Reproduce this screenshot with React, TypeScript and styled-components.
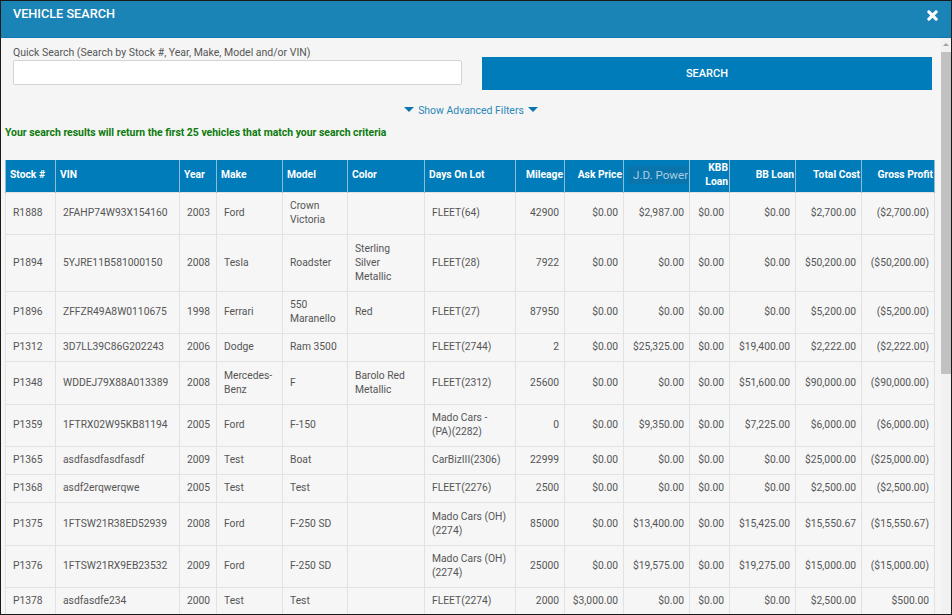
import React from 'react';
import styled, { createGlobalStyle } from 'styled-components';

const GlobalStyle = createGlobalStyle`
  html, body {
    margin: 0;
    padding: 0;
    height: 100%;
    overflow: hidden;
    background: #f5f5f5;
  }
  body {
    font-family: Roboto, "Liberation Sans", sans-serif;
    font-size: 11px;
    color: #555;
  }
`;

const Modal = styled.div`
  width: 952px;
  height: 615px;
  box-sizing: border-box;
  border: 1px solid #1a1a1a;
  display: flex;
  flex-direction: column;
  overflow: hidden;
  background: #f5f5f5;
`;

const Header = styled.header`
  flex: none;
  height: 37px;
  box-sizing: border-box;
  background: #1b84b7;
  border-bottom: 1px solid #1378ad;
  padding: 5px 12px 0 12px;
  display: flex;
  justify-content: space-between;
  align-items: flex-start;
`;

const Title = styled.h1`
  margin: 0;
  font-size: 12.7px;
  line-height: 15px;
  font-weight: 500;
  color: #fff;
`;

const CloseIcon = styled.svg`
  width: 11px;
  height: 11px;
  margin: 4px 1px 0 0;
  fill: #fff;
`;

const Body = styled.div`
  flex: 1;
  display: flex;
  min-height: 0;
`;

const Content = styled.main`
  flex: 1;
  min-width: 0;
  overflow: hidden;
`;

const SearchRow = styled.div`
  display: flex;
  gap: 20px;
  padding: 8px 0 0 12px;
  align-items: flex-start;
`;

const SearchField = styled.div`
  width: 449px;
  flex: none;
`;

const FieldLabel = styled.label`
  display: block;
  font-size: 10.5px;
  line-height: 13px;
  color: #555;
  margin-bottom: 1px;
`;

const SearchInput = styled.input`
  display: block;
  width: 100%;
  height: 25px;
  box-sizing: border-box;
  border: 1px solid #d4d4d4;
  border-radius: 2px;
  background: #fff;
  outline: none;
`;

const SearchButton = styled.button`
  flex: none;
  width: 450px;
  height: 33px;
  margin-top: 11px;
  border: none;
  background: #007cba;
  color: #fff;
  font: 500 11px Roboto, sans-serif;
`;

const FilterToggle = styled.div`
  display: flex;
  justify-content: center;
  align-items: center;
  gap: 4px;
  margin-top: 13px;
  height: 14px;
  color: #2b87b8;
  font-size: 10.45px;
`;

const Caret = styled.span`
  display: inline-block;
  width: 0;
  height: 0;
  border-left: 5px solid transparent;
  border-right: 5px solid transparent;
  border-top: 5px solid #0a78b0;
  margin-top: -2px;
`;

const Notice = styled.p`
  margin: 9px 0 0 4px;
  font-size: 10.43px;
  line-height: 14px;
  font-weight: 700;
  color: #0b7a0b;
`;

const Table = styled.table`
  margin: 20px 0 0 4px;
  width: 929px;
  table-layout: fixed;
  border-collapse: collapse;
`;

const HeadCell = styled.th<{ $right?: boolean }>`
  height: 32px;
  box-sizing: border-box;
  padding: 0 1px 2px ${({ $right }) => ($right ? '0' : '4px')};
  background: #007cba;
  border: 1px solid #8fbcd4;
  border-top: none;
  border-bottom: none;
  color: #fff;
  font-size: 10.3px;
  line-height: 14px;
  font-weight: 700;
  text-align: ${({ $right }) => ($right ? 'right' : 'left')};
`;

const PowerLabel = styled.span`
  display: block;
  margin: 0 0 0 4px;
  padding: 2px 0 2px 5px;
  text-align: left;
  white-space: nowrap;
  overflow: hidden;
  background: #0a74ad;
  color: #a9cfe4;
  font-weight: 400;
  font-size: 11.6px;
`;

const Row = styled.tr`
  background: #f6f6f6;
`;

const Cell = styled.td<{ $right?: boolean }>`
  box-sizing: border-box;
  padding: 4px ${({ $right }) => ($right ? '5px' : '8px')} 4px 7px;
  border: 1px solid #e2e2e2;
  color: #555;
  font-size: 10.3px;
  line-height: 14px;
  text-align: ${({ $right }) => ($right ? 'right' : 'left')};
`;

const Scrollbar = styled.div`
  flex: none;
  width: 10px;
  display: flex;
  flex-direction: column;
  align-items: center;
  background: #f1f1f1;
`;

const ScrollArrow = styled.span`
  flex: none;
  margin: 5px 0 6px;
  width: 0;
  height: 0;
  border-left: 3px solid transparent;
  border-right: 3px solid transparent;
  border-bottom: 3px solid #a3a3a3;
`;

const ScrollThumb = styled.div`
  flex: none;
  width: 100%;
  height: 322px;
  background: #c1c1c1;
`;

const columns = [
  { label: 'Stock #', width: 50 },
  { label: 'VIN', width: 124 },
  { label: 'Year', width: 37 },
  { label: 'Make', width: 66 },
  { label: 'Model', width: 65 },
  { label: 'Color', width: 77 },
  { label: 'Days On Lot', width: 91 },
  { label: 'Mileage', width: 49, right: true },
  { label: 'Ask Price', width: 59, right: true },
  { label: 'J.D. Power', width: 66, right: true, power: true },
  { label: 'KBB Loan', width: 40, right: true },
  { label: 'BB Loan', width: 66, right: true },
  { label: 'Total Cost', width: 66, right: true },
  { label: 'Gross Profit', width: 73, right: true },
];

const rows = [
  { h: 42, c: ['R1888', '2FAHP74W93X154160', '2003', 'Ford', 'Crown Victoria', '', 'FLEET(64)', '42900', '$0.00', '$2,987.00', '$0.00', '$0.00', '$2,700.00', '($2,700.00)'] },
  { h: 57, c: ['P1894', '5YJRE11B581000150', '2008', 'Tesla', 'Roadster', 'Sterling Silver Metallic', 'FLEET(28)', '7922', '$0.00', '$0.00', '$0.00', '$0.00', '$50,200.00', '($50,200.00)'] },
  { h: 42, c: ['P1896', 'ZFFZR49A8W0110675', '1998', 'Ferrari', '550 Maranello', 'Red', 'FLEET(27)', '87950', '$0.00', '$0.00', '$0.00', '$0.00', '$5,200.00', '($5,200.00)'] },
  { h: 28, c: ['P1312', '3D7LL39C86G202243', '2006', 'Dodge', 'Ram 3500', '', 'FLEET(2744)', '2', '$0.00', '$25,325.00', '$0.00', '$19,400.00', '$2,222.00', '($2,222.00)'] },
  { h: 43, c: ['P1348', 'WDDEJ79X88A013389', '2008', 'Mercedes-Benz', 'F', 'Barolo Red Metallic', 'FLEET(2312)', '25600', '$0.00', '$0.00', '$0.00', '$51,600.00', '$90,000.00', '($90,000.00)'] },
  { h: 42, c: ['P1359', '1FTRX02W95KB81194', '2005', 'Ford', 'F-150', '', 'Mado Cars - (PA)(2282)', '0', '$0.00', '$9,350.00', '$0.00', '$7,225.00', '$6,000.00', '($6,000.00)'] },
  { h: 28, c: ['P1365', 'asdfasdfasdfasdf', '2009', 'Test', 'Boat', '', 'CarBizIII(2306)', '22999', '$0.00', '$0.00', '$0.00', '$0.00', '$25,000.00', '($25,000.00)'] },
  { h: 28, c: ['P1368', 'asdf2erqwerqwe', '2005', 'Test', 'Test', '', 'FLEET(2276)', '2500', '$0.00', '$0.00', '$0.00', '$0.00', '$2,500.00', '($2,500.00)'] },
  { h: 43, c: ['P1375', '1FTSW21R38ED52939', '2008', 'Ford', 'F-250 SD', '', 'Mado Cars (OH)(2274)', '85000', '$0.00', '$13,400.00', '$0.00', '$15,425.00', '$15,550.67', '($15,550.67)'] },
  { h: 42, c: ['P1376', '1FTSW21RX9EB23532', '2009', 'Ford', 'F-250 SD', '', 'Mado Cars (OH)(2274)', '25000', '$0.00', '$19,575.00', '$0.00', '$19,275.00', '$15,000.00', '($15,000.00)'] },
  { h: 28, c: ['P1378', 'asdfasdfe234', '2000', 'Test', 'Test', '', 'FLEET(2274)', '2000', '$3,000.00', '$0.00', '$0.00', '$0.00', '$2,500.00', '$500.00'] },
];

const App: React.FC = () => (
  <>
    <GlobalStyle />
    <Modal>
      <Header>
        <Title>VEHICLE SEARCH</Title>
        <CloseIcon viewBox="0 0 12 12">
          <path d="M2.6 0.4 6 3.6 9.4 0.4Q10 0 10.6 0.4L11.6 1.4Q12 2 11.6 2.6L8.4 6 11.6 9.4Q12 10 11.6 10.6L10.6 11.6Q10 12 9.4 11.6L6 8.4 2.6 11.6Q2 12 1.4 11.6L0.4 10.6Q0 10 0.4 9.4L3.6 6 0.4 2.6Q0 2 0.4 1.4L1.4 0.4Q2 0 2.6 0.4z" />
        </CloseIcon>
      </Header>
      <Body>
        <Content>
          <SearchRow>
            <SearchField>
              <FieldLabel>Quick Search (Search by Stock #, Year, Make, Model and/or VIN)</FieldLabel>
              <SearchInput />
            </SearchField>
            <SearchButton>SEARCH</SearchButton>
          </SearchRow>
          <FilterToggle>
            <Caret />
            Show Advanced Filters
            <Caret />
          </FilterToggle>
          <Notice>Your search results will return the first 25 vehicles that match your search criteria</Notice>
          <Table>
            <colgroup>
              {columns.map(col => (
                <col key={col.label} style={{ width: col.width }} />
              ))}
            </colgroup>
            <thead>
              <tr>
                {columns.map(col => (
                  <HeadCell key={col.label} $right={col.right}>
                    {col.power ? <PowerLabel>{col.label}</PowerLabel> : col.label}
                  </HeadCell>
                ))}
              </tr>
            </thead>
            <tbody>
              {rows.map(row => (
                <Row key={row.c[0]} style={{ height: row.h }}>
                  {row.c.map((value, i) => (
                    <Cell key={i} $right={columns[i].right}>
                      {value}
                    </Cell>
                  ))}
                </Row>
              ))}
            </tbody>
          </Table>
        </Content>
        <Scrollbar>
          <ScrollArrow />
          <ScrollThumb />
        </Scrollbar>
      </Body>
    </Modal>
  </>
);

export default App;
